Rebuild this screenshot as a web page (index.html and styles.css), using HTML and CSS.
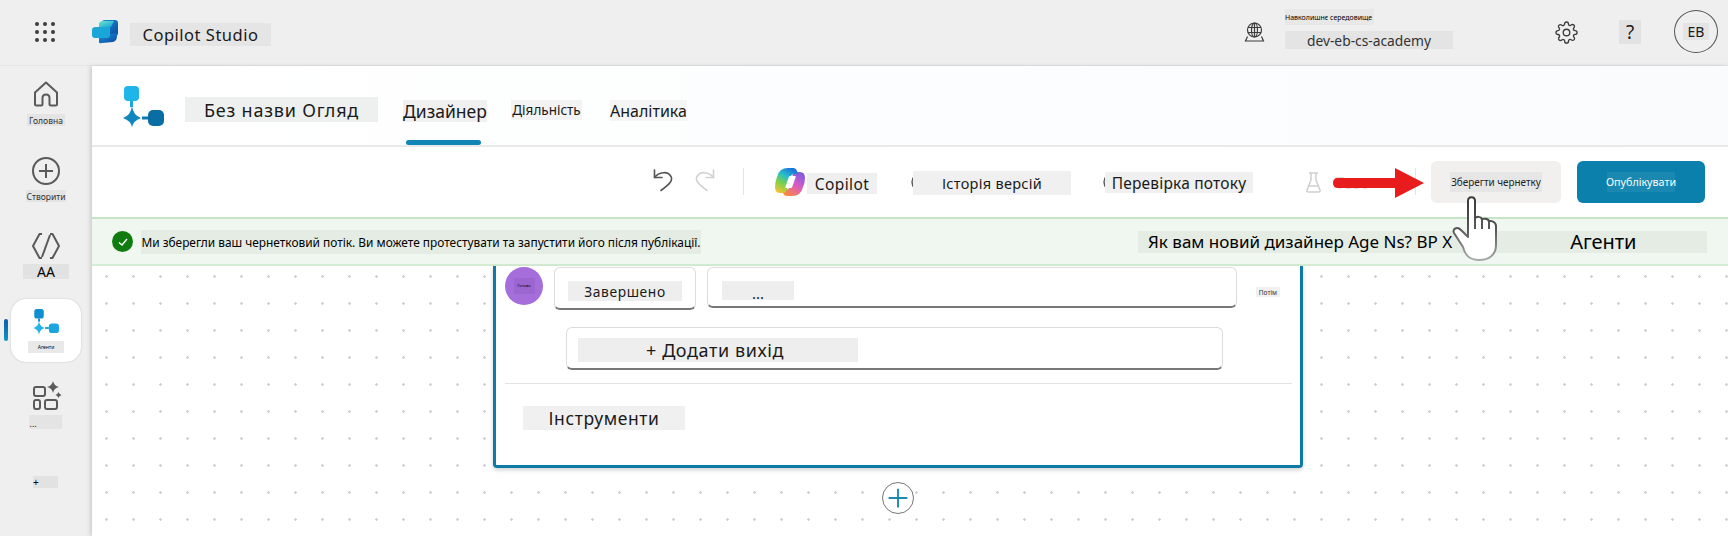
FILE: index.html
```html
<!DOCTYPE html>
<html>

<head>
    <title>Copilot Studio</title>
    <meta charset="utf-8">
    <link rel="stylesheet" href="styles.css">
</head>

<body>
    <header class="topbar">
        <div class="waffle">
            <i></i><i></i><i></i><i></i><i></i><i></i><i></i><i></i><i></i>
        </div>
        <svg class="studio-logo" viewBox="0 0 26 24">
            <defs>
                <linearGradient id="logoTop" x1="0" y1="0" x2="1" y2="1">
                    <stop offset="0" stop-color="#6fe6c8"/>
                    <stop offset="1" stop-color="#12a0d8"/>
                </linearGradient>
                <linearGradient id="logoLow" x1="0" y1="0" x2="1" y2="1">
                    <stop offset="0" stop-color="#1b8fd8"/>
                    <stop offset="1" stop-color="#0a4aa0"/>
                </linearGradient>
            </defs>
            <path d="M9 5 Q9 0 13 0 H23 Q26 0 26 3 V13 Q26 16 23 16 H15 V10 H9 Z" fill="url(#logoLow)"/>
            <path d="M7 4 Q7 1 11 1 H22 L19 7 H7 Z" fill="url(#logoTop)"/>
            <path d="M7 18 V22 Q7 24 10 23 L21 22 Q25 21 25 16 V13 L7 16 Z" fill="url(#logoLow)"/>
            <path d="M0 10 Q0 7 4 7 H18 V15 Q18 18 15 18 H3 Q0 18 0 15 Z" fill="#1aa7d8"/>
        </svg>
        <div class="chip app-name">Copilot Studio</div>

        <svg class="globe" viewBox="0 0 20 20" fill="none" stroke="#3c3c3c" stroke-width="1.2">
            <circle cx="10" cy="8" r="7"/>
            <ellipse cx="10" cy="8" rx="3" ry="7"/>
            <path d="M3.5 5.500h13M3.500 10.500h13M10 1v14"/>
            <path d="M3 14.500 1 19h18l-2-4.500"/>
        </svg>
        <div class="env">
            <div class="chip env-label">Навколишнє середовище</div>
            <div class="chip env-name">dev-eb-cs-academy</div>
        </div>
        <svg class="gear" viewBox="0 0 24 24" fill="none" stroke="#3c3c3c" stroke-width="1.4">
            <circle cx="12" cy="12" r="3.4"/>
            <path d="M19.4 15a1.65 1.65 0 0 0 .33 1.82l.06.06a2 2 0 0 1 0 2.83 2 2 0 0 1-2.83 0l-.06-.06a1.65 1.65 0 0 0-1.82-.33 1.65 1.65 0 0 0-1 1.51V21a2 2 0 0 1-2 2 2 2 0 0 1-2-2v-.09A1.65 1.65 0 0 0 9 19.4a1.65 1.65 0 0 0-1.82.33l-.06.06a2 2 0 0 1-2.83 0 2 2 0 0 1 0-2.83l.06-.06a1.65 1.65 0 0 0 .33-1.82 1.65 1.65 0 0 0-1.51-1H3a2 2 0 0 1-2-2 2 2 0 0 1 2-2h.09A1.65 1.65 0 0 0 4.6 9a1.65 1.65 0 0 0-.33-1.82l-.06-.06a2 2 0 0 1 0-2.83 2 2 0 0 1 2.83 0l.06.06a1.65 1.65 0 0 0 1.82.33H9a1.65 1.65 0 0 0 1-1.51V3a2 2 0 0 1 2-2 2 2 0 0 1 2 2v.09a1.65 1.65 0 0 0 1 1.51 1.65 1.65 0 0 0 1.82-.33l.06-.06a2 2 0 0 1 2.83 0 2 2 0 0 1 0 2.83l-.06.06a1.65 1.65 0 0 0-.33 1.82V9a1.65 1.65 0 0 0 1.51 1H21a2 2 0 0 1 2 2 2 2 0 0 1-2 2h-.09a1.65 1.65 0 0 0-1.51 1z"/>
        </svg>
        <div class="chip help">?</div>
        <div class="avatar"><span class="chip">EB</span></div>
    </header>

    <div class="app">
        <nav class="sidebar">
            <svg class="nav-home" viewBox="0 0 26 26" fill="none" stroke="#5a5a5a" stroke-width="2" stroke-linejoin="round">
                <path d="M2 11.5 13 1.5l11 10V23q0 1.5-1.5 1.5H18q-1.5 0-1.5-1.5v-6q0-3.5-3.5-3.5t-3.5 3.5v6q0 1.500-1.500 1.500H3.500Q2 24.500 2 23Z"/>
            </svg>
            <div class="chip nav-label">Головна</div>

            <svg class="nav-create" viewBox="0 0 28 28" fill="none" stroke="#5a5a5a" stroke-width="2">
                <circle cx="14" cy="14" r="13"/>
                <path d="M14 7v14M7 14h14"/>
            </svg>
            <div class="chip nav-label nav-label-create">Створити</div>

            <svg class="nav-code" viewBox="0 0 28 26" fill="none" stroke="#5a5a5a" stroke-width="2" stroke-linejoin="round">
                <path d="M10 1H7.500L1 13l6.500 12H10"/>
                <path d="M18 1h2.500L27 13l-6.500 12H18"/>
                <path d="M18 2 10 24"/>
            </svg>
            <div class="chip nav-aa">AA</div>

            <div class="nav-tile">
                <svg class="nav-flow" viewBox="0 0 41 41">
                    <rect x="2" y="0" width="15" height="15" rx="4" fill="#0f8fd0"/>
                    <rect x="8" y="15" width="3" height="5" fill="#0f8fd0"/>
                    <path d="M9.500 19Q10 27 18 30 10 33 9.500 41 9 33 1 30 9 27 9.500 19Z" fill="#27b4e4"/>
                    <rect x="19" y="28.500" width="6" height="3" fill="#1ba5dd"/>
                    <rect x="25" y="23" width="16" height="15" rx="5" fill="#1ba5dd"/>
                </svg>
                <div class="chip nav-tile-label">Агенти</div>
            </div>

            <svg class="nav-apps" viewBox="0 0 29 29" fill="none" stroke="#5a5a5a" stroke-width="2">
                <rect x="1" y="6" width="11" height="9" rx="2"/>
                <rect x="1" y="19" width="6" height="9" rx="2"/>
                <rect x="12" y="19" width="12" height="9" rx="2"/>
                <path d="M20 0q1 5 6 6-5 1-6 6-1-5-6-6 5-1 6-6Z" fill="#5a5a5a" stroke="none"/>
                <path d="M25.500 11q.5 2 3 3-2.500 1-3 3-.5-2-3-3 2.500-1 3-3Z" fill="#5a5a5a" stroke="none"/>
            </svg>
            <div class="chip nav-more">...</div>
            <div class="chip nav-plus">+</div>
            <div class="nav-marker"></div>
        </nav>

        <main class="main">
            <section class="agent-head">
                <svg class="flow-logo" viewBox="0 0 41 41">
                    <rect x="1" y="0" width="15" height="15" rx="4" fill="#1fb5e8"/>
                    <rect x="7" y="15" width="3" height="6" fill="#1fa5dc"/>
                    <path d="M9 20Q10 29 18 32 10 35 9 41 8 35 0 32 8 29 9 20Z" fill="#0f86bd"/>
                    <rect x="19" y="30.500" width="6" height="3" fill="#0d78ae"/>
                    <rect x="25" y="24" width="16" height="16" rx="5" fill="#0a6ea5"/>
                </svg>
                <div class="chip agent-name">Без назви Огляд</div>
                <div class="tabs">
                    <div class="tab tab-active"><span class="chip tab-design">Дизайнер</span></div>
                    <div class="tab"><span class="chip tab-activity">Діяльність</span></div>
                    <div class="tab"><span class="chip tab-analytics">Аналітика</span></div>
                </div>
            </section>

            <section class="toolbar">
                <svg class="tool-undo" viewBox="0 0 20 24" fill="none" stroke="#555" stroke-width="1.600" stroke-linecap="round" stroke-linejoin="round">
                    <path d="M1.500 2v7.500H9"/>
                    <path d="M1.500 9.500C6 3.500 15 3 18 8.500c2 4-1 7.500-10 14"/>
                </svg>
                <svg class="tool-redo" viewBox="0 0 20 24" fill="none" stroke="#d2d2d2" stroke-width="1.600" stroke-linecap="round" stroke-linejoin="round">
                    <path d="M18.500 2v7.500H11"/>
                    <path d="M18.500 9.500C14 3.500 5 3 2 8.500c-2 4 1 7.500 10 14"/>
                </svg>
                <div class="tool-sep"></div>
                <svg class="copilot-icon" viewBox="0 0 30 28">
                    <defs>
                        <linearGradient id="copLeft" x1="0.700" y1="0" x2="0.200" y2="1">
                            <stop offset="0" stop-color="#1c6fe0"/>
                            <stop offset="0.350" stop-color="#25c0c8"/>
                            <stop offset="0.650" stop-color="#7ed04a"/>
                            <stop offset="1" stop-color="#f4c430"/>
                        </linearGradient>
                        <linearGradient id="copRight" x1="0.800" y1="0" x2="0.200" y2="1">
                            <stop offset="0" stop-color="#7a5ce0"/>
                            <stop offset="0.450" stop-color="#d45ac8"/>
                            <stop offset="1" stop-color="#ff8a3c"/>
                        </linearGradient>
                    </defs>
                    <path d="M17 28h-5q-3 0-4-3l-1-3h3q4 0 5-4l3-12q1-2 5-2h2q5 0 5 6 0 5-2 9-2 9-11 9Z" fill="url(#copRight)"/>
                    <path d="M13 0h5q3 0 4 3l1 3h-3q-4 0-5 4l-3 12q-1 3-5 3H5q-5 0-5-6 0-5 2-10 2-9 11-9Z" fill="url(#copLeft)"/>
                    <path d="M15 8h5q1 0 .7 1l-3.500 10q-.4 1-1.200 1h-5q-1 0-.7-1l3.500-10q.4-1 1.200-1Z" fill="#fff"/>
                </svg>
                <div class="chip tool-copilot">Copilot</div>
                <svg class="tool-ring ring-history" viewBox="0 0 20 22" fill="none" stroke="#555" stroke-width="1.400">
                    <circle cx="10" cy="11" r="9"/>
                </svg>
                <div class="chip tool-history">Історія версій</div>
                <svg class="tool-ring ring-check" viewBox="0 0 20 22" fill="none" stroke="#555" stroke-width="1.400">
                    <circle cx="10" cy="11" r="9"/>
                </svg>
                <div class="chip tool-check">Перевірка потоку</div>
                <svg class="tool-flask" viewBox="0 0 15 21" fill="none" stroke="#cfcfcf" stroke-width="1.500" stroke-linejoin="round">
                    <path d="M3 1h9M5 1v7L1 18q-.5 2 1.500 2h10q2 0 1.500-2L10 8V1"/>
                    <path d="M3 14h9"/>
                </svg>
                <div class="tool-test">Test</div>
                <div class="tool-sep tool-sep-end"></div>
                <button class="btn-save" type="button"><span class="chip">Зберегти чернетку</span></button>
                <button class="btn-publish" type="button"><span class="chip">Опублікувати</span></button>
            </section>

            <section class="banner">
                <div class="banner-check">
                    <svg viewBox="0 0 12 12" fill="none" stroke="#fff" stroke-width="1.400">
                        <path d="M2 6.500 5 9l5-6"/>
                    </svg>
                </div>
                <div class="chip banner-text">Ми зберегли ваш чернетковий потік. Ви можете протестувати та запустити його після публікації.</div>
                <div class="chip banner-right">
                    <span>Як вам новий дизайнер Age Ns? BP X</span>
                    <span class="banner-agents">Агенти</span>
                </div>
            </section>

            <section class="canvas">
                <div class="node">
                    <div class="node-row">
                        <div class="node-avatar"><span class="node-avatar-text">Готово</span></div>
                        <div class="field field-status"><span class="chip">Завершено</span></div>
                        <div class="field field-value"><span class="chip">...</span></div>
                        <div class="chip node-then">Потім</div>
                    </div>
                    <div class="field field-add"><span class="chip">+ Додати вихід</span></div>
                    <div class="node-divider"></div>
                    <div class="chip node-tools">Інструменти</div>
                </div>
                <div class="add-step">
                    <svg viewBox="0 0 32 32" fill="none" stroke="#1a8ab5" stroke-width="2">
                        <path d="M16 6v20M6 16h20"/>
                    </svg>
                </div>
            </section>
        </main>
    </div>

    <svg class="red-arrow" viewBox="0 0 91 30">
        <path d="M5 10H62V0L91 15 62 30V20H5Q0 20 0 15T5 10Z" fill="#e81c1c"/>
    </svg>
    <svg class="hand" viewBox="0 0 50 68" fill="#fff" stroke-width="2" stroke-linejoin="round">
        <defs>
            <linearGradient id="handLine" x1="0" y1="0" x2="0" y2="1">
                <stop offset="0" stop-color="#3a3a3a"/>
                <stop offset="0.500" stop-color="#555"/>
                <stop offset="1" stop-color="#a8a8a8"/>
            </linearGradient>
        </defs>
        <path stroke="url(#handLine)" d="M17 6C17 1 24 1 24 6V24C24 21 31 21 31 25 31 23 38 23 38 27 38 25 45 26 45 31V50C45 60 38 65 28 65 18 65 14 60 12 52L3 38C1 34 6 31 10 35L17 42Z"/>
        <path stroke="#555" d="M24 24V34M31 25V34M38 27V34" fill="none"/>
    </svg>
</body>

</html>
```

FILE: styles.css
```css
* {
    box-sizing: border-box;
}

html, body {
    margin: 0;
    width: 1728px;
    height: 536px;
    overflow: hidden;
}

body {
    position: relative;
    background: #efefef;
    color: #1a1a1a;
    font-family: "Noto Sans", "Open Sans", sans-serif;
}

/* translated labels sit on a flat patch */
.chip {
    display: flex;
    align-items: center;
    justify-content: center;
    background: #eeeeee;
    white-space: nowrap;
}

/* top bar */
.topbar {
    display: flex;
    align-items: flex-start;
    height: 66px;
    border-bottom: 1px solid #e6e6e6;
    background: #efefef;
}

.waffle {
    display: grid;
    grid-template-columns: repeat(3, 4px);
    gap: 4px;
    margin: 22px 0 0 35px;
}

.waffle i {
    width: 4px;
    height: 4px;
    border-radius: 50%;
    background: #3c3c3c;
}

.studio-logo {
    width: 26px;
    height: 24px;
    margin: 20px 0 0 37px;
}

.app-name {
    width: 141px;
    height: 23px;
    margin: 23px 0 0 12px;
    background: #e5e5e5;
    font-size: 16.500px;
    letter-spacing: .5px;
}

.globe {
    width: 21px;
    height: 20px;
    margin: 22px 0 0 973px;
}

.env {
    margin: 9px 0 0 20px;
}

.env-label {
    justify-content: flex-start;
    width: 89px;
    height: 16px;
    background: #e8e8e8;
    font-size: 7px;
    color: #000;
}

.env-name {
    width: 168px;
    height: 18px;
    margin-top: 6px;
    background: #e4e4e4;
    font-size: 13.800px;
    color: #333;
}

.gear {
    width: 23px;
    height: 23px;
    margin: 21px 0 0 102px;
}

.help {
    width: 22px;
    height: 24px;
    margin: 20px 0 0 41px;
    background: #e2e2e2;
    font-size: 19px;
}

.avatar {
    display: flex;
    align-items: center;
    justify-content: center;
    width: 44px;
    height: 43px;
    margin: 10px 0 0 33px;
    border: 1px solid #555;
    border-radius: 50%;
}

.avatar .chip {
    width: 26px;
    height: 17px;
    background: #e4e4e4;
    font-size: 14px;
}

/* left rail */
.app {
    display: flex;
    height: 470px;
}

.sidebar {
    position: relative;
    display: flex;
    flex-direction: column;
    align-items: center;
    flex: none;
    width: 92px;
    padding-top: 15px;
}

.nav-home {
    width: 26px;
    height: 26px;
}

.nav-label {
    width: 38px;
    height: 12px;
    margin-top: 7px;
    background: #e4e4e4;
    font-size: 8.500px;
    color: #333;
}

.nav-create {
    width: 28px;
    height: 28px;
    margin-top: 31px;
}

.nav-label-create {
    width: 40px;
    margin-top: 5px;
}

.nav-code {
    width: 28px;
    height: 26px;
    margin-top: 31px;
}

.nav-aa {
    width: 46px;
    height: 15px;
    margin-top: 5px;
    background: #e2e2e2;
    font-size: 14px;
    color: #000;
}

.nav-tile {
    display: flex;
    flex-direction: column;
    align-items: center;
    width: 70px;
    height: 63px;
    margin-top: 20px;
    padding-top: 10px;
    border-radius: 15px;
    background: #fff;
    box-shadow: 0 0 2px rgba(0, 0, 0, .2);
}

.nav-flow {
    width: 26px;
    height: 26px;
}

.nav-tile-label {
    width: 36px;
    height: 12px;
    margin-top: 6px;
    background: #e9e9e9;
    font-size: 5px;
    color: #000;
}

.nav-marker {
    position: absolute;
    left: 4px;
    top: 253px;
    width: 4px;
    height: 22px;
    border-radius: 2px;
    background: linear-gradient(#0a5ea8, #0f94c8);
}

.nav-apps {
    width: 29px;
    height: 29px;
    margin: 19px 0 0 2px;
}

.nav-more {
    align-items: flex-end;
    justify-content: flex-start;
    width: 33px;
    height: 14px;
    margin: 5px 0 0 -2px;
    padding-left: 1px;
    background: #e4e4e4;
    font-size: 9px;
    line-height: 10px;
    color: #222;
}

.nav-plus {
    justify-content: flex-start;
    width: 25px;
    height: 12px;
    margin: 47px 0 0 -1px;
    background: #e2e2e2;
    font-size: 10px;
    color: #000;
}

/* main column */
.main {
    flex: 1;
    min-width: 0;
    background: #fff;
    box-shadow: -2px 0 4px rgba(0, 0, 0, .14);
}

.agent-head {
    display: flex;
    align-items: flex-start;
    height: 81px;
    border-bottom: 2px solid #e9e9e9;
    background: linear-gradient(90deg, #fff, #f9fbfd);
}

.flow-logo {
    width: 41px;
    height: 41px;
    margin: 20px 0 0 31px;
}

.agent-name {
    width: 193px;
    height: 25px;
    margin: 31px 0 0 21px;
    background: #eef0f0;
    font-size: 18px;
    letter-spacing: .8px;
}

.tabs {
    display: flex;
    height: 79px;
    margin-left: 25px;
}

.tab {
    position: relative;
    padding-top: 34px;
    margin-right: 24px;
}

.tab-active::after {
    content: "";
    position: absolute;
    left: 3px;
    bottom: 0;
    width: 75px;
    height: 5px;
    border-radius: 3px;
    background: #0f86b3;
}

.tab-design {
    width: 84px;
    height: 22px;
    background: #f0f0f0;
    font-size: 17.500px;
}

.tab-activity {
    width: 71px;
    height: 20px;
    background: #f3f3f3;
    font-size: 13.500px;
}

.tab-analytics {
    width: 77px;
    height: 21px;
    margin-left: 4px;
    background: #f5f5f5;
    font-size: 16px;
}

/* toolbar */
.toolbar {
    display: flex;
    align-items: flex-start;
    height: 70px;
    padding-right: 23px;
}

.tool-undo {
    width: 20px;
    height: 24px;
    margin: 21px 0 0 561px;
}

.tool-redo {
    width: 20px;
    height: 24px;
    margin: 21px 0 0 22px;
}

.tool-sep {
    flex: none;
    width: 1px;
    height: 27px;
    margin: 21px 0 0 28px;
    background: #e3e3e3;
}

.copilot-icon {
    width: 30px;
    height: 28px;
    margin: 21px 0 0 31px;
}

.tool-copilot {
    width: 70px;
    height: 21px;
    margin: 26px 0 0 2px;
    background: #efefef;
    font-size: 15.500px;
    letter-spacing: .4px;
}

.tool-ring {
    flex: none;
    width: 20px;
    height: 22px;
    margin-top: 24px;
}

.ring-history {
    margin-left: 34px;
}

.tool-history {
    position: relative;
    width: 158px;
    height: 24px;
    margin: 24px 0 0 -18px;
    background: #f0f0f0;
    font-size: 14.500px;
    letter-spacing: .3px;
}

.ring-check {
    margin-left: 32px;
}

.tool-check {
    position: relative;
    width: 148px;
    height: 21px;
    margin: 25px 0 0 -18px;
    background: #f0f0f0;
    font-size: 15.500px;
    letter-spacing: .2px;
}

.tool-flask {
    flex: none;
    width: 17px;
    height: 21px;
    margin: 25px 0 0 52px;
}

.tool-test {
    margin: 26px 0 0 13px;
    font-size: 16px;
    line-height: 20px;
    font-weight: 700;
    color: #dedede;
}

.tool-sep-end {
    margin-left: auto;
}

.btn-save,
.btn-publish {
    display: flex;
    align-items: center;
    justify-content: center;
    flex: none;
    height: 42px;
    margin-top: 14px;
    padding: 0;
    border: 0;
    border-radius: 6px;
    font-family: inherit;
}

.btn-save {
    width: 130px;
    margin-left: 15px;
    background: #f1f0ef;
}

.btn-save .chip {
    width: 92px;
    height: 20px;
    background: #e6e6e6;
    font-size: 9.900px;
    color: #222;
}

.btn-publish {
    width: 128px;
    margin-left: 16px;
    background: #0b80ad;
}

.btn-publish .chip {
    width: 68px;
    height: 20px;
    background: #1a88b0;
    font-size: 10.700px;
    color: #fff;
}

/* saved banner */
.banner {
    display: flex;
    align-items: center;
    height: 49px;
    border-top: 2px solid #c5e3c5;
    border-bottom: 2px solid #d4ecd4;
    background: #f0f7f0;
}

.banner-check {
    display: flex;
    align-items: center;
    justify-content: center;
    flex: none;
    width: 21px;
    height: 21px;
    margin-left: 20px;
    border-radius: 50%;
    background: #107c10;
}

.banner-check svg {
    width: 12px;
    height: 12px;
}

.banner-text {
    flex: none;
    width: 560px;
    height: 24px;
    margin-left: 8px;
    background: #e4ece4;
    font-size: 11.900px;
    color: #000;
}

.banner-right {
    flex: none;
    justify-content: flex-start;
    width: 569px;
    height: 22px;
    margin-left: 437px;
    padding-left: 10px;
    background: #e4ece4;
    font-size: 17px;
    color: #000;
}

.banner-agents {
    margin-left: 118px;
    font-size: 20px;
}

/* flow canvas */
.canvas {
    height: 270px;
    padding-bottom: 1px;
    background-color: #fff;
    background-image: radial-gradient(circle, #d0d0d0 1px, transparent 1.500px);
    background-size: 27px 27px;
    background-position: 1px -3px;
}

.node {
    width: 810px;
    height: 202px;
    margin-left: 401px;
    padding-top: 1px;
    border: 3px solid #0f7aa6;
    border-top: 0;
    border-radius: 0 0 4px 4px;
    background: #fff;
    box-shadow: 0 2px 4px rgba(0, 0, 0, .18);
}

.node-row {
    display: flex;
    align-items: flex-start;
}

.node-avatar {
    display: flex;
    align-items: center;
    justify-content: center;
    width: 38px;
    height: 38px;
    margin-left: 9px;
    border-radius: 50%;
    background: #a56edb;
}

.node-avatar-text {
    display: block;
    width: 21px;
    height: 16px;
    background: #9c66d0;
    font-size: 4px;
    line-height: 16px;
    text-align: center;
    color: #000;
    overflow: hidden;
}

.field {
    border: 1px solid #dcdcdc;
    border-bottom: 2px solid #777;
    border-radius: 6px;
    background: #fff;
}

.field-status {
    width: 142px;
    height: 43px;
    margin-left: 11px;
    padding: 13px 0 0 13px;
}

.field-status .chip {
    width: 114px;
    height: 20px;
    font-size: 13.800px;
    letter-spacing: .6px;
}

.field-value {
    width: 530px;
    height: 41px;
    margin-left: 11px;
    padding: 13px 0 0 14px;
}

.field-value .chip {
    align-items: flex-end;
    width: 72px;
    height: 19px;
    font-size: 15px;
    line-height: 14px;
}

.node-then {
    width: 24px;
    height: 10px;
    margin: 20px 0 0 19px;
    background: #f0f0f0;
    font-size: 6.500px;
    color: #333;
}

.field-add {
    width: 657px;
    height: 43px;
    margin: 17px 0 0 70px;
    padding: 10px 0 0 11px;
}

.field-add .chip {
    width: 280px;
    height: 24px;
    padding-right: 6px;
    font-size: 18px;
    letter-spacing: .6px;
}

.node-divider {
    width: 787px;
    height: 1px;
    margin: 13px 0 0 9px;
    background: #e3e3e3;
}

.node-tools {
    width: 162px;
    height: 24px;
    margin: 22px 0 0 27px;
    background: #f0f0f0;
    font-size: 17.500px;
    letter-spacing: .6px;
}

.add-step {
    display: flex;
    align-items: center;
    justify-content: center;
    width: 32px;
    height: 32px;
    margin: 14px 0 0 790px;
    border: 1px solid #777;
    border-radius: 50%;
    background: #fff;
}

.add-step svg {
    width: 30px;
    height: 30px;
}

/* annotation drawn over the screenshot */
.red-arrow {
    position: absolute;
    left: 1333px;
    top: 168px;
    width: 91px;
    height: 30px;
}

.hand {
    position: absolute;
    left: 1451px;
    top: 195px;
    width: 50px;
    height: 68px;
}
```
